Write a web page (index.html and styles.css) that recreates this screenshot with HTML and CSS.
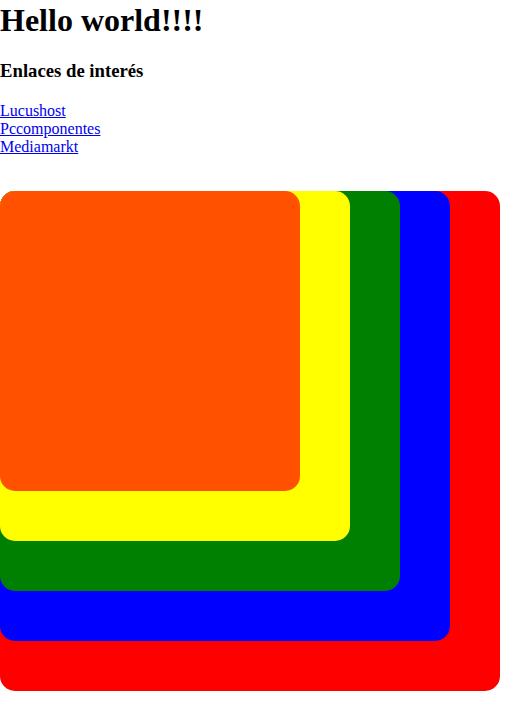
FILE: index.html
```html
<!DOCTYPE html>
<html>
<head>
<meta charset="utf-8">
<link rel="stylesheet" href="styles.css">
</head>
<body>
<h1 class="title">Hello world!!!!</h1>
<h3 class="subtitle">Enlaces de interés</h3>
<div class="links">
<a href="#">Lucushost</a><br>
<a href="#">Pccomponentes</a><br>
<a href="#">Mediamarkt</a>
</div>
<div class="box red">
  <div class="box blue">
    <div class="box green">
      <div class="box yellow">
        <div class="box orange"></div>
      </div>
    </div>
  </div>
</div>
</body>
</html>
```
FILE: styles.css
```css
body {
  margin: 0;
  font-family: "Liberation Serif", "Times New Roman", serif;
}
.title {
  margin: 2px 0 21.44px 0;
}
.subtitle {
  margin: 18.72px 0 19.72px 0;
}
.links {
  line-height: normal;
  margin-bottom: 35px;
}
.box {
  border-radius: 15px;
}
.red { width: 500px; height: 500px; background: #ff0000; }
.blue { width: 450px; height: 450px; background: #0000ff; }
.green { width: 400px; height: 400px; background: #008000; }
.yellow { width: 350px; height: 350px; background: #ffff00; }
.orange { width: 300px; height: 300px; background: #ff5100; }
```
